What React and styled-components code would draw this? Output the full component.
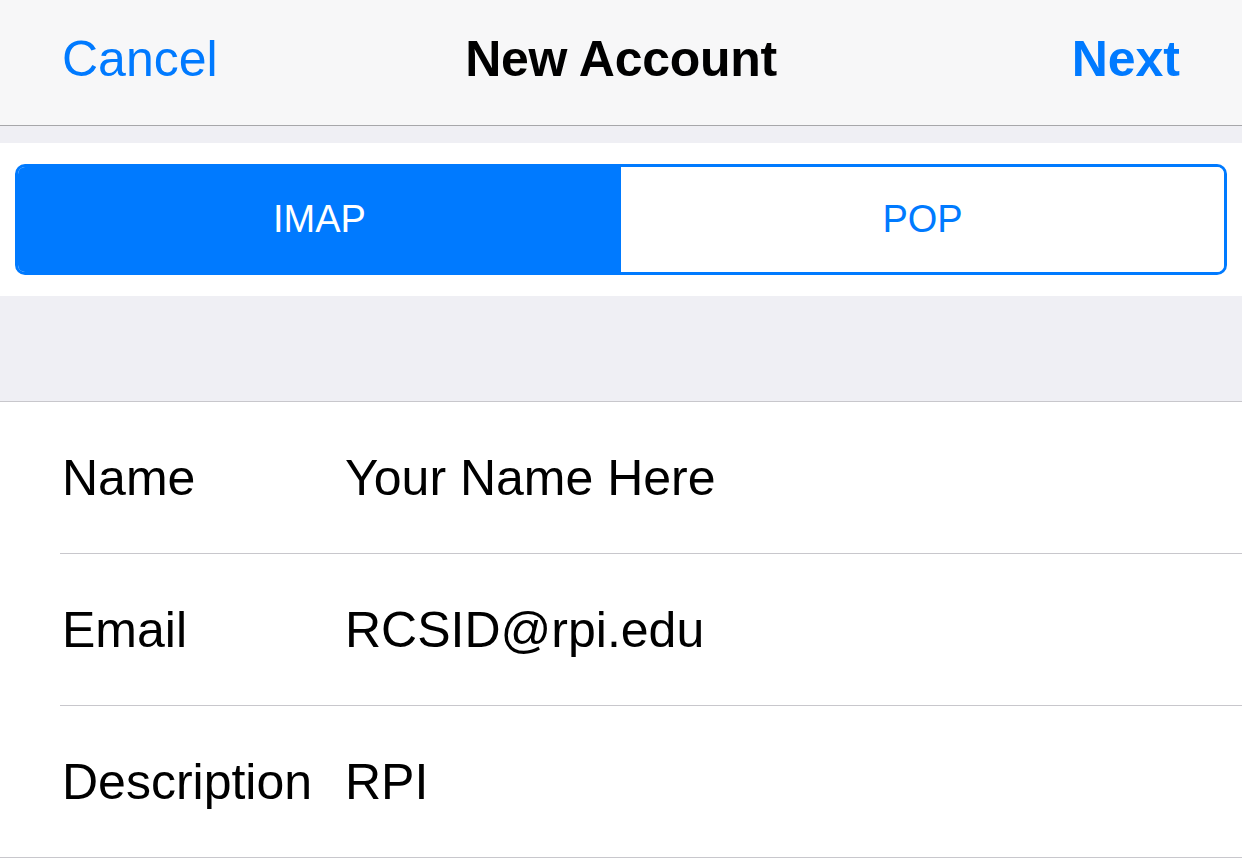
import React, { useState } from "react";
import styled, { createGlobalStyle } from "styled-components";

const GlobalStyle = createGlobalStyle`
  html, body {
    margin: 0;
    padding: 0;
    background: #ffffff;
  }
  body {
    font-family: "Liberation Sans", Arial, sans-serif;
    -webkit-font-smoothing: antialiased;
  }
`;

const Page = styled.div`
  width: 1242px;
  min-height: 860px;
  background: #ffffff;
`;

const NavBar = styled.header`
  display: grid;
  grid-template-columns: 1fr auto 1fr;
  align-items: center;
  box-sizing: border-box;
  height: 126px;
  padding: 0 62px 8px 62px;
  background: #f7f7f8;
  border-bottom: 1px solid #a7a7aa;
`;

const NavButton = styled.button`
  border: none;
  background: none;
  padding: 0;
  font-family: inherit;
  font-size: 50px;
  color: #007aff;
  font-weight: ${(p) => (p.$bold ? 700 : 400)};
  justify-self: ${(p) => (p.$end ? "end" : "start")};
  cursor: pointer;
`;

const Title = styled.h1`
  margin: 0;
  font-size: 50px;
  font-weight: 700;
  color: #000;
  letter-spacing: -0.3px;
`;

const GroupGap = styled.div`
  background: #efeff4;
  height: ${(p) => p.$h}px;
  border-bottom: ${(p) => (p.$line ? "1px solid #c8c7cc" : "none")};
`;

const SegmentSection = styled.div`
  background: #ffffff;
  padding: 21px 15px;
`;

const Segmented = styled.div`
  display: flex;
  box-sizing: border-box;
  height: 111px;
  border: 3px solid #007aff;
  border-radius: 10px;
  overflow: hidden;
`;

const Segment = styled.button`
  flex: 1;
  border: none;
  margin: 0;
  padding: 0;
  font-family: inherit;
  font-size: 38px;
  background: ${(p) => (p.$active ? "#007aff" : "#ffffff")};
  color: ${(p) => (p.$active ? "#ffffff" : "#007aff")};
  cursor: pointer;
`;

const FieldList = styled.div`
  background: #ffffff;
  padding-left: 60px;
  border-bottom: 1px solid #c8c7cc;
`;

const FieldRow = styled.div`
  display: flex;
  align-items: center;
  height: 151px;
  padding-left: 2px;
  font-size: 50px;
  color: #000;
  &:not(:last-child) {
    border-bottom: 1px solid #c8c7cc;
  }
`;

const Label = styled.span`
  width: 283px;
  flex-shrink: 0;
  white-space: nowrap;
`;

const Value = styled.span`
  white-space: nowrap;
`;

const fields = [
  { label: "Name", value: "Your Name Here" },
  { label: "Email", value: "RCSID@rpi.edu" },
  { label: "Description", value: "RPI" },
];

export default function App() {
  const [mode, setMode] = useState("IMAP");

  return (
    <Page>
      <GlobalStyle />
      <NavBar>
        <NavButton>Cancel</NavButton>
        <Title>New Account</Title>
        <NavButton $bold $end>
          Next
        </NavButton>
      </NavBar>
      <GroupGap $h={17} />
      <SegmentSection>
        <Segmented>
          {["IMAP", "POP"].map((m) => (
            <Segment key={m} $active={mode === m} onClick={() => setMode(m)}>
              {m}
            </Segment>
          ))}
        </Segmented>
      </SegmentSection>
      <GroupGap $h={105} $line />
      <FieldList>
        {fields.map((f) => (
          <FieldRow key={f.label}>
            <Label>{f.label}</Label>
            <Value>{f.value}</Value>
          </FieldRow>
        ))}
      </FieldList>
    </Page>
  );
}
